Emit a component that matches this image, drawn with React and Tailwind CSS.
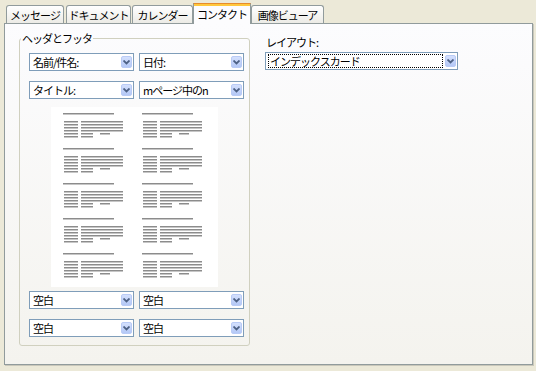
import React from 'react'

function Chevron() {
  return (
    <svg width="7" height="5" viewBox="0 0 7 5" className="block">
      <path d="M0.5 0.5 L3.5 3.5 L6.5 0.5" fill="none" stroke="#4D6185" strokeWidth="1.8" />
    </svg>
  )
}

function Combo({ label, w, focus }) {
  return (
    <div className={`flex h-[18px] items-center border border-[#7F9DB9] bg-white pr-px ${w}`}>
      <div className="flex h-full flex-1 items-center pl-[2px]">
        {focus ? (
          <span className="flex h-[14px] flex-1 items-center border border-dotted border-black pl-px">{label}</span>
        ) : (
          <span className="pl-[1px]">{label}</span>
        )}
      </div>
      <div className="ml-[2px] flex h-[12px] w-[11px] items-center justify-center rounded-[2px] border border-[#B9CBF6] bg-linear-to-b from-[#D4E0FD] to-[#B4C8F6]">
        <Chevron />
      </div>
    </div>
  )
}

function Line({ x, y, w }) {
  return (
    <>
      <rect x={x} y={y} width={w} height="1" fill="#8C8C8C" />
      <rect x={x} y={y + 1} width={w} height="1" fill="#C6C6C6" />
    </>
  )
}

function Card({ x, y }) {
  const rows = [0, 1, 2, 3, 4, 5]
  return (
    <g>
      <Line x={x} y={y} w={51} />
      {rows.map((i) => (
        <g key={i}>
          <Line x={x + 1} y={y + 8 + i * 3} w={14} />
          {i < 4 && <Line x={x + 18} y={y + 8 + i * 3} w={42} />}
          {i >= 4 && <Line x={x + 18} y={y + 8 + i * 3} w={12} />}
          {i === 4 && <Line x={x + 37} y={y + 8 + i * 3} w={10} />}
        </g>
      ))}
    </g>
  )
}

function Preview() {
  const rows = [0, 1, 2, 3, 4]
  return (
    <svg width="167" height="180" className="mx-auto block bg-white">
      {rows.map((r) => (
        <g key={r}>
          <Card x={12} y={6 + r * 35} />
          <Card x={91} y={6 + r * 35} />
        </g>
      ))}
    </svg>
  )
}

function Tab({ label, w, active }) {
  if (active) {
    return (
      <div className={`relative z-10 mb-[-1px] flex h-[21px] flex-col border-x border-t border-x-[#919B9C] border-t-[#E68B2C] bg-[#FCFCFE] ${w}`}>
        <div className="h-[2px] bg-[#FFC73C]" />
        <div className="flex flex-1 items-center justify-center whitespace-nowrap pb-[2px]">{label}</div>
      </div>
    )
  }
  return (
    <div className={`flex h-[18px] items-center justify-center whitespace-nowrap rounded-t-[3px] border border-b-0 border-[#919B9C] bg-linear-to-b from-white to-[#ECEBE6] ${w}`}>
      {label}
    </div>
  )
}

export default function App() {
  return (
    <div className="h-[371px] w-[536px] bg-[#ECE9D8] font-['Noto_Sans_CJK_JP',sans-serif] text-[11px] leading-[14px] tracking-[-1px] text-black">
      <div className="flex h-[23px] items-end pl-[6px]">
        <Tab label="メッセージ" w="w-[58px]" />
        <div className="ml-[2px]">
          <Tab label="ドキュメント" w="w-[65px]" />
        </div>
        <div className="ml-[1px]">
          <Tab label="カレンダー" w="w-[61px]" />
        </div>
        <Tab label="コンタクト" w="w-[58px]" active />
        <Tab label="画像ビューア" w="w-[73px]" />
      </div>

      <div className="ml-[4px] flex h-[342px] w-[529px] border border-[#919B9C] bg-linear-to-b from-[#FCFCFE] to-[#F4F3EE] shadow-[1px_1px_0_#C9C7BA]">
        <fieldset className="ml-[14px] mt-[7px] h-[315px] w-[231px] rounded-[3px] border border-[#D0D0BF] px-0 pb-0">
          <legend className="ml-[1px] px-[1px] leading-[14px]">ヘッダとフッタ</legend>
          <div className="flex flex-col pl-[9px] pt-[8px]">
            <div className="flex gap-[5px]">
              <Combo label="名前/件名:" w="w-[105px]" />
              <Combo label="日付:" w="w-[105px]" />
            </div>
            <div className="mt-[10px] flex gap-[5px]">
              <Combo label="タイトル:" w="w-[105px]" />
              <Combo label="mページ中のn" w="w-[105px]" />
            </div>
            <div className="mt-[8px] pr-[9px]">
              <Preview />
            </div>
            <div className="mt-[4px] flex gap-[5px]">
              <Combo label="空白" w="w-[105px]" />
              <Combo label="空白" w="w-[105px]" />
            </div>
            <div className="mt-[10px] flex gap-[5px]">
              <Combo label="空白" w="w-[105px]" />
              <Combo label="空白" w="w-[105px]" />
            </div>
          </div>
        </fieldset>

        <div className="ml-[15px] mt-[11px] flex flex-col">
          <div className="pl-px">レイアウト:</div>
          <div className="mt-[3px]">
            <Combo label="インデックスカード" w="w-[193px]" focus />
          </div>
        </div>
      </div>
    </div>
  )
}
